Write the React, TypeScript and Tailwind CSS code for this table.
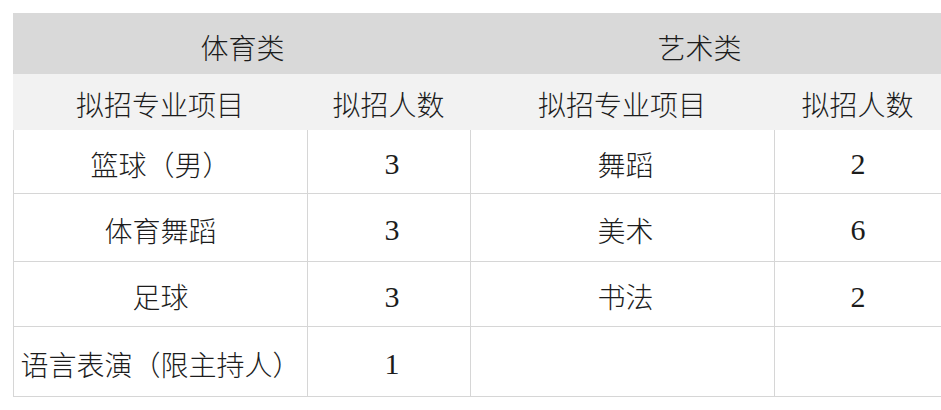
import React from "react";

type Row = { h: string; a: string; b: string; c: string; d: string };

const rows: Row[] = [
  { h: "h-[64px]", a: "篮球（男）", b: "3", c: "舞蹈", d: "2" },
  { h: "h-[68px]", a: "体育舞蹈", b: "3", c: "美术", d: "6" },
  { h: "h-[65px]", a: "足球", b: "3", c: "书法", d: "2" },
  { h: "h-[70px]", a: "语言表演（限主持人）", b: "1", c: "", d: "" },
];

const cjk = "font-['Noto_Sans_CJK_SC','Noto_Sans',sans-serif] font-light text-[28px]";
const num = "font-['Liberation_Serif','Noto_Sans_CJK_SC',serif] text-[30px]";
const cell = "border-l border-b border-[#d6d6d6] flex items-center justify-center pt-[4px]";

export default function App() {
  return (
    <div className="w-[941px] h-[410px] bg-white pt-[13px] pl-[13px] overflow-hidden text-[#1c1c1c]">
      <div className="grid grid-cols-[294px_163px_304px_167px]">
        <div className={`col-span-2 h-[61px] bg-[#d9d9d9] flex items-center justify-center pt-[6px] pl-[2px] ${cjk}`}>
          体育类
        </div>
        <div className={`col-span-2 h-[61px] bg-[#d9d9d9] flex items-center justify-center pt-[6px] pr-[12px] ${cjk}`}>
          艺术类
        </div>
        {["拟招专业项目", "拟招人数", "拟招专业项目", "拟招人数"].map((t, i) => (
          <div key={i} className={`h-[56px] bg-[#f2f2f2] flex items-center justify-center pt-[4px] ${cjk}`}>
            {t}
          </div>
        ))}
        {rows.map((r, i) => (
          <React.Fragment key={i}>
            <div className={`${r.h} ${cell} ${cjk}`}>{r.a}</div>
            <div className={`${r.h} ${cell} pl-[6px] ${num}`}>{r.b}</div>
            <div className={`${r.h} ${cell} pl-[6px] ${cjk}`}>{r.c}</div>
            <div className={`${r.h} ${cell} ${num}`}>{r.d}</div>
          </React.Fragment>
        ))}
      </div>
    </div>
  );
}
